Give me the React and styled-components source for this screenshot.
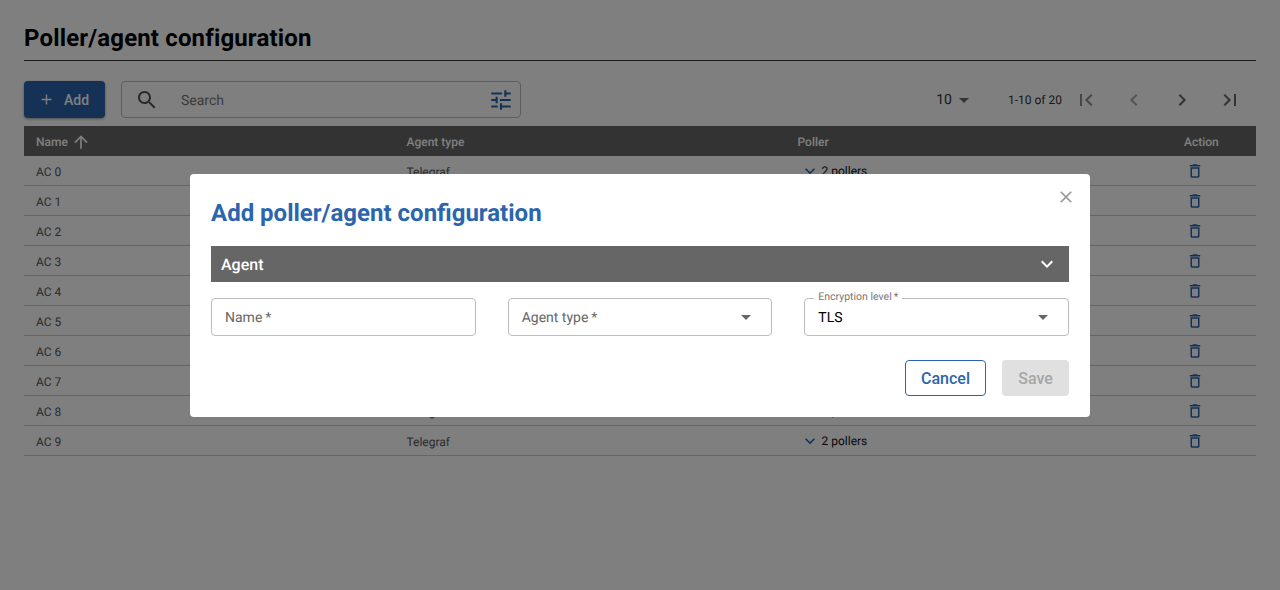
import React from 'react'
import styled, { createGlobalStyle } from 'styled-components'

const GlobalStyle = createGlobalStyle`
  html, body {
    margin: 0;
    padding: 0;
    background: #fff;
    font-family: Roboto, "Liberation Sans", sans-serif;
    text-rendering: geometricPrecision;
  }
  * { box-sizing: border-box; }
`

const Page = styled.div`
  height: 590px;
  padding: 0 24px;
  overflow: hidden;
`

const Title = styled.h1`
  margin: 0;
  height: 61px;
  padding-top: 22px;
  font-size: 24px;
  line-height: 32px;
  font-weight: 700;
  letter-spacing: 0.15px;
  color: #000;
  border-bottom: 1px solid #333;
`

const Toolbar = styled.div`
  display: flex;
  align-items: center;
  height: 37px;
  margin-top: 20px;
`

const AddButton = styled.button`
  display: flex;
  align-items: center;
  width: 81px;
  height: 37px;
  padding: 0 0 0 14px;
  border: none;
  border-radius: 4px;
  background: #2b65ad;
  color: #fff;
  font-family: inherit;
  font-size: 14px;
  font-weight: 500;
  box-shadow: 0 1px 3px rgba(0, 0, 0, 0.4);
  gap: 9px;
`

const SearchBox = styled.div`
  display: flex;
  align-items: center;
  width: 400px;
  height: 37px;
  margin-left: 16px;
  padding: 0 6px 0 13px;
  border: 1px solid #bbb;
  border-radius: 4px;
`

const SearchText = styled.span`
  flex: 1;
  margin-left: 22px;
  padding-top: 2px;
  font-size: 14px;
  color: #777;
`

const Pager = styled.div`
  display: flex;
  align-items: center;
  margin-left: auto;
  color: #333;
`

const PageSize = styled.div`
  display: flex;
  align-items: center;
  font-size: 14px;
  margin-right: 32px;
`

const Range = styled.span`
  font-size: 12px;
  margin-right: 12px;
`

const PagerIcons = styled.div`
  display: flex;
  gap: 24px;
  margin-right: 14px;
`

const Table = styled.div`
  margin-top: 8px;
`

const Row = styled.div`
  display: grid;
  grid-template-columns: 370.5px 391px 386.5px 84px;
  align-items: center;
  height: 30px;
  font-size: 12px;
  color: #555;
  border-bottom: 1px solid #ccc;
`

const HeadRow = styled(Row)`
  background: #666;
  color: #fff;
  font-weight: 500;
  border-bottom: none;
`

const Cell = styled.div`
  display: flex;
  align-items: center;
  padding: 1px 0 0 12px;
`

const BodyCell = styled(Cell)`
  padding-top: 3px;
`

const SortArrow = styled.span`
  display: flex;
  margin-left: 3px;
`

const PollerCell = styled(Cell)`
  color: #111;
  padding: 0 0 0 14.5px;
  gap: 1.5px;
`

const ActionCell = styled(Cell)`
  padding: 0 0 0 14px;
`

const Overlay = styled.div`
  position: fixed;
  inset: 0;
  display: flex;
  align-items: center;
  justify-content: center;
  background: rgba(0, 0, 0, 0.5);
`

const Modal = styled.div`
  position: relative;
  width: 900px;
  height: 243px;
  padding: 21px;
  background: #fff;
  border-radius: 4px;
`

const CloseButton = styled.div`
  position: absolute;
  top: 13px;
  right: 14px;
  display: flex;
  color: #9a9a9a;
`

const ModalTitle = styled.h2`
  margin: 0;
  height: 36px;
  font-size: 24px;
  line-height: 36px;
  font-weight: 700;
  color: #2b65ad;
`

const SectionBar = styled.div`
  display: flex;
  align-items: center;
  justify-content: space-between;
  height: 36px;
  margin-top: 15px;
  padding: 0 10px;
  background: #666;
  color: #fff;
  font-size: 16px;
  font-weight: 500;
`

const SectionLabel = styled.span`
  padding-top: 1px;
`

const Fields = styled.div`
  display: grid;
  grid-template-columns: repeat(3, 1fr);
  gap: 32px;
  margin-top: 16px;
`

const Field = styled.div`
  position: relative;
  display: flex;
  align-items: center;
  justify-content: space-between;
  height: 38px;
  padding: 0 13px;
  border: 1px solid #bdbdbd;
  border-radius: 4px;
  font-size: 14px;
  color: #666;
`

const FieldHint = styled.span`
  padding-top: 2px;
`

const FieldValue = styled.span`
  padding-top: 2px;
  color: #000;
  font-size: 14px;
`

const FloatLabel = styled.span`
  position: absolute;
  top: -9px;
  left: 9px;
  padding: 0 4px;
  background: #fff;
  font-size: 10.5px;
  line-height: 14px;
  color: #777;
`

const Actions = styled.div`
  display: flex;
  justify-content: flex-end;
  gap: 16px;
  margin-top: 24px;
`

const ActionButton = styled.button`
  height: 36px;
  padding: 1px 0 0;
  border-radius: 4px;
  font-family: inherit;
  font-size: 16px;
  font-weight: 500;
  width: ${(p) => (p.$primary ? '67px' : '81px')};
  border: ${(p) => (p.$primary ? 'none' : '1px solid #2b65ad')};
  background: ${(p) => (p.$primary ? '#e0e0e0' : '#fff')};
  color: ${(p) => (p.$primary ? '#a6a6a6' : '#2b65ad')};
`

const Icon = ({ d, size = 24, color = 'currentColor' }) => (
  <svg width={size} height={size} viewBox="0 0 24 24" fill={color} style={{ display: 'block' }}>
    <path d={d} />
  </svg>
)

const paths = {
  plus: 'M19 13h-6v6h-2v-6H5v-2h6V5h2v6h6v2z',
  search: 'M15.5 14h-.79l-.28-.27C15.41 12.59 16 11.11 16 9.5 16 5.91 13.09 3 9.5 3S3 5.91 3 9.5 5.91 16 9.5 16c1.61 0 3.09-.59 4.23-1.57l.27.28v.79l5 4.99L20.49 19l-4.99-5zm-6 0C7.01 14 5 11.99 5 9.5S7.01 5 9.5 5 14 7.01 14 9.5 11.99 14 9.5 14z',
  tune: 'M3 17v2h6v-2H3zM3 5v2h10V5H3zm10 16v-2h8v-2h-8v-2h-2v6h2zM7 9v2H3v2h4v2h2V9H7zm14 4v-2H11v2h10zm-6-4h2V7h4V5h-4V3h-2v6z',
  drop: 'M7 10l5 5 5-5z',
  first: 'M18.41 16.59L13.82 12l4.59-4.59L17 6l-6 6 6 6zM6 6h2v12H6z',
  prev: 'M15.41 7.41L14 6l-6 6 6 6 1.41-1.41L10.83 12z',
  next: 'M10 6L8.59 7.41 13.17 12l-4.58 4.59L10 18l6-6z',
  last: 'M5.59 7.41L10.18 12l-4.59 4.59L7 18l6-6-6-6zM16 6h2v12h-2z',
  up: 'M4 12l1.41 1.41L11 7.83V20h2V7.83l5.58 5.59L20 12l-8-8-8 8z',
  down: 'M16.59 8.59L12 13.17 7.41 8.59 6 10l6 6 6-6z',
  trash: 'M6 19c0 1.1.9 2 2 2h8c1.1 0 2-.9 2-2V7H6v12zM8 9h8v10H8V9zm7.5-5l-1-1h-5l-1 1H5v2h14V4z',
  close: 'M19 6.41L17.59 5 12 10.59 6.41 5 5 6.41 10.59 12 5 17.59 6.41 19 12 13.41 17.59 19 19 17.59 13.41 12z',
}

const rows = [0, 1, 2, 3, 4, 5, 6, 7, 8, 9]

export default function App() {
  return (
    <Page>
      <GlobalStyle />
      <Title>Poller/agent configuration</Title>
      <Toolbar>
        <AddButton>
          <Icon d={paths.plus} size={17} />
          Add
        </AddButton>
        <SearchBox>
          <Icon d={paths.search} color="#555" />
          <SearchText>Search</SearchText>
          <Icon d={paths.tune} color="#2b65ad" size={26} />
        </SearchBox>
        <Pager>
          <PageSize>
            10
            <Icon d={paths.drop} color="#666" />
          </PageSize>
          <Range>1-10 of 20</Range>
          <PagerIcons>
            <Icon d={paths.first} color="#8c8c8c" />
            <Icon d={paths.prev} color="#a8a8a8" />
            <Icon d={paths.next} color="#666" />
            <Icon d={paths.last} color="#666" />
          </PagerIcons>
        </Pager>
      </Toolbar>
      <Table>
        <HeadRow>
          <Cell>
            Name
            <SortArrow>
              <Icon d={paths.up} size={20} />
            </SortArrow>
          </Cell>
          <Cell>Agent type</Cell>
          <Cell>Poller</Cell>
          <Cell>Action</Cell>
        </HeadRow>
        {rows.map((n) => (
          <Row key={n}>
            <BodyCell>AC {n}</BodyCell>
            <BodyCell>Telegraf</BodyCell>
            <PollerCell>
              <Icon d={paths.down} size={20} color="#2b65ad" />
              2 pollers
            </PollerCell>
            <ActionCell>
              <Icon d={paths.trash} size={18} color="#2b65ad" />
            </ActionCell>
          </Row>
        ))}
      </Table>
      <Overlay>
        <Modal>
          <CloseButton>
            <Icon d={paths.close} size={20} />
          </CloseButton>
          <ModalTitle>Add poller/agent configuration</ModalTitle>
          <SectionBar>
            <SectionLabel>Agent</SectionLabel>
            <Icon d={paths.down} />
          </SectionBar>
          <Fields>
            <Field>
              <FieldHint>Name{'\u2009'}*</FieldHint>
            </Field>
            <Field>
              <FieldHint>Agent type{'\u2009'}*</FieldHint>
              <Icon d={paths.drop} color="#666" />
            </Field>
            <Field>
              <FloatLabel>Encryption level{'\u2009'}*</FloatLabel>
              <FieldValue>TLS</FieldValue>
              <Icon d={paths.drop} color="#666" />
            </Field>
          </Fields>
          <Actions>
            <ActionButton>Cancel</ActionButton>
            <ActionButton $primary>Save</ActionButton>
          </Actions>
        </Modal>
      </Overlay>
    </Page>
  )
}
